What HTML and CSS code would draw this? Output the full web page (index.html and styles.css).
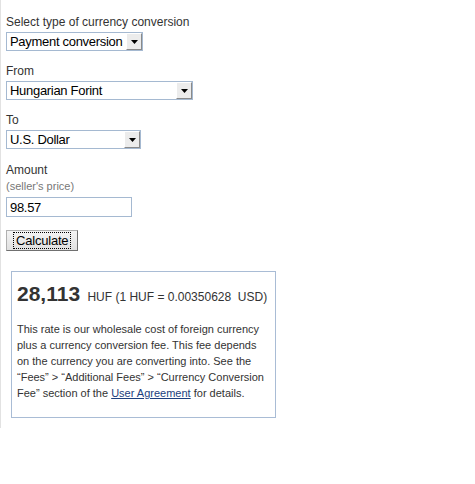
FILE: index.html
```html
<!DOCTYPE html>
<html lang="en">
<head>
    <meta charset="UTF-8">
    <meta name="viewport" content="width=device-width, initial-scale=1.0">
    <title>Currency Conversion</title>
    <link rel="stylesheet" href="styles.css">
</head>
<body>
    <div class="page">
        <div class="field">
            <label class="label" for="conv-type">Select type of currency conversion</label>
            <div class="select select-type">
                <select id="conv-type">
                    <option>Payment conversion</option>
                </select>
                <span class="arrow"><svg width="7" height="4" viewBox="0 0 7 4"><path d="M0 0H7L3.5 4Z" fill="#000"/></svg></span>
            </div>
        </div>

        <div class="field">
            <label class="label" for="conv-from">From</label>
            <div class="select select-from">
                <select id="conv-from">
                    <option>Hungarian Forint</option>
                </select>
                <span class="arrow"><svg width="7" height="4" viewBox="0 0 7 4"><path d="M0 0H7L3.5 4Z" fill="#000"/></svg></span>
            </div>
        </div>

        <div class="field">
            <label class="label" for="conv-to">To</label>
            <div class="select select-to">
                <select id="conv-to">
                    <option>U.S. Dollar</option>
                </select>
                <span class="arrow"><svg width="7" height="4" viewBox="0 0 7 4"><path d="M0 0H7L3.5 4Z" fill="#000"/></svg></span>
            </div>
        </div>

        <div class="field field-amount">
            <label class="label" for="amount">Amount</label>
            <div class="hint">(seller's price)</div>
            <input type="text" id="amount" class="amount" value="98.57">
        </div>

        <button class="calc"><span class="focus">Calculate</span></button>

        <div class="result">
            <div class="total"><span class="big">28,113</span> HUF (1 HUF = 0.00350628&nbsp; USD)</div>
            <p class="note">This rate is our wholesale cost of foreign currency plus a currency conversion fee. This fee depends on the currency you are converting into. See the “Fees” &gt; “Additional Fees” &gt; “Currency Conversion Fee” section of the <a href="#">User Agreement</a> for details.</p>
        </div>
    </div>
</body>
</html>
```

FILE: styles.css
```css
body {
    margin: 0;
    padding: 0;
    font-family: "Liberation Sans", Arial, sans-serif;
    color: #333;
    background-color: #fff;
}

.page {
    width: 300px;
    padding: 15px 0 10px 5px;
    border-left: 1px solid #e2e2e2;
}

.field {
    margin-bottom: 13px;
}

.field-amount {
    padding-top: 1px;
}

.label {
    display: block;
    font-size: 12px;
    line-height: 15px;
    margin-bottom: 2px;
}

.select {
    display: flex;
    height: 19px;
    box-sizing: border-box;
    border: 1px solid #a5b9d1;
    background-color: #fff;
}

.select-type { width: 137px; }
.select-from { width: 187px; }
.select-to { width: 135px; }

.select select {
    flex: 1;
    min-width: 0;
    -webkit-appearance: none;
    appearance: none;
    border: none;
    outline: none;
    background: transparent;
    padding: 0 0 0 3px;
    margin: 0;
    font-family: "Liberation Sans", Arial, sans-serif;
    font-size: 13px;
    letter-spacing: -0.3px;
    color: #000;
}

.arrow {
    width: 16px;
    display: flex;
    align-items: center;
    justify-content: center;
    box-sizing: border-box;
    background-color: #ececec;
    border-top: 1px solid #fff;
    border-left: 1px solid #fff;
    border-right: 1px solid #8a8a8a;
    border-bottom: 1px solid #8a8a8a;
}

.hint {
    font-size: 11px;
    line-height: 13px;
    color: #777;
    margin-bottom: 4px;
}

.amount {
    display: block;
    width: 126px;
    height: 20px;
    box-sizing: border-box;
    border: 1px solid #a5b9d1;
    padding: 0 3px;
    font-family: "Liberation Sans", Arial, sans-serif;
    font-size: 13px;
    letter-spacing: -0.3px;
    color: #000;
}

.calc {
    display: block;
    height: 21px;
    padding: 1px 6px;
    margin: 0 0 20px 0;
    border: 1px solid #707070;
    border-top-color: #b0b0b0;
    border-left-color: #b0b0b0;
    background: linear-gradient(#f4f4f4, #e0e0e0);
    font-family: "Liberation Sans", Arial, sans-serif;
    font-size: 13px;
    letter-spacing: -0.2px;
    color: #000;
}

.focus {
    display: block;
    padding: 0 2px;
    line-height: 15px;
    border: 1px dotted #000;
}

.result {
    width: 265px;
    margin-left: 5px;
    box-sizing: border-box;
    border: 1px solid #a9bcd5;
    padding: 10px 6px 16px 5px;
}

.total {
    font-size: 12px;
    color: #333;
    white-space: nowrap;
}

.big {
    font-size: 21px;
    font-weight: bold;
    margin-right: 4px;
}

.note {
    margin: 15px 0 0 0;
    font-size: 11px;
    line-height: 16px;
    color: #333;
}

.note a {
    color: #1c3f7e;
}
```
